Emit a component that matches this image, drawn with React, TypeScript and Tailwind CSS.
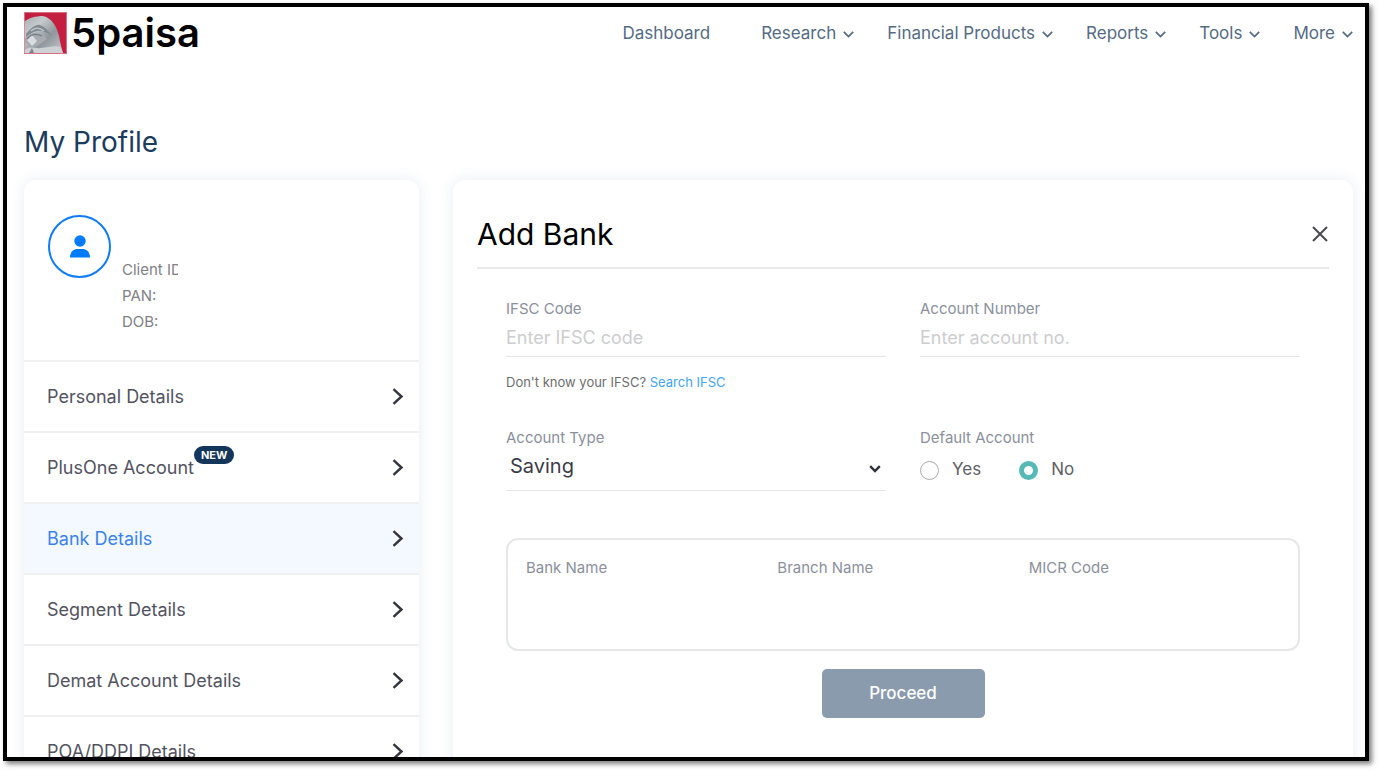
import React, { useState } from "react";

interface NavItem {
  label: string;
  hasMenu: boolean;
}

interface ProfileLink {
  label: string;
  isNew?: boolean;
}

const NAV_ITEMS: NavItem[] = [
  { label: "Dashboard", hasMenu: false },
  { label: "Research", hasMenu: true },
  { label: "Financial Products", hasMenu: true },
  { label: "Reports", hasMenu: true },
  { label: "Tools", hasMenu: true },
  { label: "More", hasMenu: true },
];

const PROFILE_LINKS: ProfileLink[] = [
  { label: "Personal Details" },
  { label: "PlusOne Account", isNew: true },
  { label: "Bank Details" },
  { label: "Segment Details" },
  { label: "Demat Account Details" },
  { label: "POA/DDPI Details" },
];

const BANK_FIELDS = ["Bank Name", "Branch Name", "MICR Code"];

function Logo() {
  return (
    <a href="#" className="flex items-center gap-1 text-black">
      <svg width="43" height="42" viewBox="0 0 43 42" aria-hidden="true">
        <defs>
          <linearGradient id="stone" x1="0" y1="0" x2="1" y2="1">
            <stop offset="0" stopColor="#a9aeb2" />
            <stop offset="0.3" stopColor="#c6cacd" />
            <stop offset="0.6" stopColor="#8f969c" />
            <stop offset="1" stopColor="#c9cccf" />
          </linearGradient>
        </defs>
        <rect width="43" height="42" fill="#c41f40" />
        <path d="M0 10C4 6 12 4 19 4C28 6 33 15 35 24C36 31 38 37 39 41H0Z" fill="url(#stone)" />
        <path d="M2 22C7 16 12 12 16 13C21 15 25 19 28 24C22 20 17 18 13 19C8 20 5 23 2 25Z" fill="#828b92" />
        <path d="M0 27C5 22 10 20 15 21C19 22 21 24 23 27C19 30 15 33 11 35C6 34 2 31 0 30Z" fill="#a6acb1" />
        <path d="M3 28L8 23L13 29L8 34Z" fill="#dadddf" />
        <path d="M3 27C7 22 12 21 18 24" fill="none" stroke="#737d85" strokeWidth="1.3" />
        <path d="M7 19C11 15 15 15 20 19" fill="none" stroke="#c3c7ca" strokeWidth="1.3" />
        <path d="M0 39C5 33 11 37 17 36C25 35 31 33 36 35L39 41H0Z" fill="#cfd2d4" />
        <path d="M5 41L8 36L10 41" fill="#7f878e" />
        <rect x="0.5" y="0.5" width="42" height="41" fill="none" stroke="#dc8494" strokeWidth="0.8" />
      </svg>
      <span className="text-[40px] leading-10 font-semibold">5paisa</span>
    </a>
  );
}

function Header() {
  return (
    <header className="flex items-center justify-between pt-[5px]">
      <Logo />
      <nav className="flex items-center gap-[33px] text-[17px] leading-6 text-[#546b83]">
        {NAV_ITEMS.map((item) => (
          <a key={item.label} href="#" className="flex items-center gap-[7px] first:mr-[18px]">
            {item.label}
            {item.hasMenu && (
              <svg width="11" height="7" viewBox="0 0 11 7" className="mt-[3px]" fill="none" stroke="currentColor" strokeWidth="1.7">
                <path d="M0.8 0.8L5.5 5.5L10.2 0.8" />
              </svg>
            )}
          </a>
        ))}
      </nav>
    </header>
  );
}

function ProfileSidebar() {
  const [active, setActive] = useState<string>("Bank Details");

  return (
    <aside className="w-[395px] shrink-0 rounded-xl bg-white shadow-[0_0_14px_rgba(60,100,140,0.12)]">
      <div className="flex gap-[11px] pt-[35px] pb-[25px] pl-6">
        <div className="flex size-[63px] items-center justify-center rounded-full border-2 border-[#0f7bf5]">
          <svg width="20" height="23" viewBox="0 0 20 23" fill="#007bff" aria-hidden="true">
            <circle cx="10" cy="6" r="5.7" />
            <path d="M0 22.5C0 17 3.5 14 7.5 14H12.5C16.5 14 20 17 20 22.5Z" />
          </svg>
        </div>
        <div className="pt-[42px] text-[15px] leading-[26px] text-[#7f7f86]">
          <p className="w-14 overflow-hidden whitespace-nowrap">Client ID</p>
          <p>PAN:</p>
          <p>DOB:</p>
        </div>
      </div>
      <ul>
        {PROFILE_LINKS.map((link) => (
          <li key={link.label} className="border-t-2 border-[#eef0f2]">
            <button
              type="button"
              onClick={() => setActive(link.label)}
              className={`flex h-[69px] w-full items-center justify-between pr-[15px] pl-[23px] text-[18px] ${
                active === link.label ? "bg-[#f3f9fe] text-[#3b82ec]" : "text-[#53535f]"
              }`}
            >
              <span className="relative">
                {link.label}
                {link.isNew && (
                  <span className="absolute -top-2 left-full flex h-[18px] items-center rounded-full bg-[#14365a] px-[7px] text-[11px] font-bold text-white">
                    NEW
                  </span>
                )}
              </span>
              <svg width="12" height="17" viewBox="0 0 12 17" fill="none" stroke="#343440" strokeWidth="2.4">
                <path d="M1.5 1.2L9.5 8.5L1.5 15.8" />
              </svg>
            </button>
          </li>
        ))}
      </ul>
    </aside>
  );
}

function AddBankForm() {
  const [isDefault, setIsDefault] = useState<string>("No");

  const labelClass = "block text-[15px] leading-5 text-[#8b909c]";
  const inputClass =
    "block h-[38px] w-full border-b border-[#e3e5e8] text-[18px] text-[#44444f] outline-none placeholder:text-[#cdcdd0]";

  return (
    <section className="flex-1 rounded-xl bg-white px-6 pt-9 shadow-[0_0_14px_rgba(60,100,140,0.12)]">
      <div className="flex items-center justify-between border-b-2 border-[#e9eaeb] pb-[15px]">
        <h2 className="text-[30px] leading-9 text-black">Add Bank</h2>
        <button type="button" aria-label="Close" className="pr-px">
          <svg width="16" height="16" viewBox="0 0 16 16" fill="none" stroke="#4b4b50" strokeWidth="2">
            <path d="M1 1L15 15M15 1L1 15" />
          </svg>
        </button>
      </div>

      <form className="px-[29px] pt-[30px]" onSubmit={(e) => e.preventDefault()}>
        <div className="grid grid-cols-2 gap-x-[34px] gap-y-9">
          <div>
            <label htmlFor="ifsc" className={labelClass}>IFSC Code</label>
            <input id="ifsc" type="text" placeholder="Enter IFSC code" className={inputClass} />
            <p className="mt-[15px] text-[13px] leading-5 text-[#6d6d6d]">
              Don't know your IFSC? <a href="#" className="text-[#42a5f5]">Search IFSC</a>
            </p>
          </div>
          <div>
            <label htmlFor="account" className={labelClass}>Account Number</label>
            <input id="account" type="text" placeholder="Enter account no." className={inputClass} />
          </div>
          <div>
            <label htmlFor="type" className={labelClass}>Account Type</label>
            <div className="relative">
              <select
                id="type"
                className="block h-[43px] w-full appearance-none border-b border-[#e3e5e8] bg-white pb-[6px] pl-1 text-[20px] text-[#3c3c48] outline-none"
              >
                <option>Saving</option>
                <option>Current</option>
              </select>
              <svg
                width="12"
                height="8"
                viewBox="0 0 12 8"
                className="pointer-events-none absolute top-[17px] right-[5px]"
                fill="none"
                stroke="#2f2f3c"
                strokeWidth="2.4"
              >
                <path d="M1.2 1.2L6 6L10.8 1.2" />
              </svg>
            </div>
          </div>
          <fieldset>
            <legend className={labelClass}>Default Account</legend>
            <div className="flex h-11 items-center gap-[38px] text-[17px] text-[#5f5f66]">
              {["Yes", "No"].map((option) => (
                <label key={option} className="flex items-center gap-[13px]">
                  <input
                    type="radio"
                    name="default"
                    value={option}
                    checked={isDefault === option}
                    onChange={() => setIsDefault(option)}
                    className="size-[19px] appearance-none rounded-full border border-[#a9a9ad] checked:border-[5px] checked:border-[#56b9b4]"
                  />
                  {option}
                </label>
              ))}
            </div>
          </fieldset>
        </div>

        <dl className="mt-[46px] grid min-h-[113px] grid-cols-3 rounded-xl border-2 border-[#e6e7e8] px-[18px] pt-[18px]">
          {BANK_FIELDS.map((field) => (
            <div key={field}>
              <dt className={labelClass}>{field}</dt>
              <dd></dd>
            </div>
          ))}
        </dl>

        <button
          type="submit"
          className="mx-auto mt-[18px] block h-[49px] w-[163px] rounded-[5px] bg-[#8b9bae] text-[17px] font-medium text-white"
        >
          Proceed
        </button>
      </form>
    </section>
  );
}

export default function App() {
  return (
    <div className="h-screen bg-white pt-[3px] pr-[10px] pb-[10px] pl-[3px] font-['Inter',sans-serif]">
      <div className="h-full overflow-hidden border-4 border-black pr-3 pl-[17px] shadow-[3px_3px_5px_rgba(0,0,0,0.5)]">
        <Header />
        <h1 className="mt-[70px] text-[28px] leading-9 text-[#1c3c5e]">My Profile</h1>
        <main className="mt-5 flex gap-[34px]">
          <ProfileSidebar />
          <AddBankForm />
        </main>
      </div>
    </div>
  );
}
